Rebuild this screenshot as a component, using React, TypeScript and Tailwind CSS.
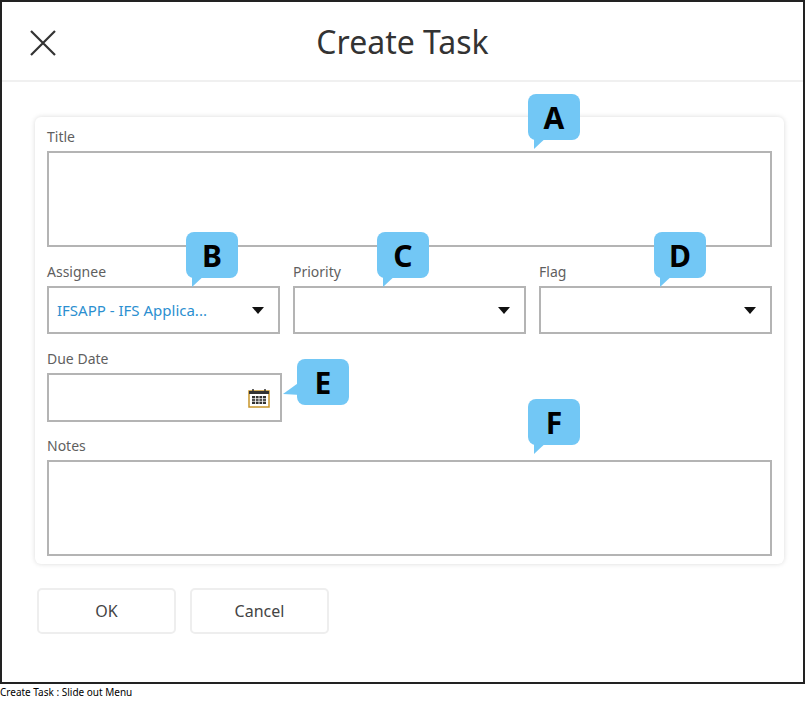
import React from 'react';

const Callout = ({ letter, className, tail }: { letter: string; className: string; tail: 'down' | 'left' }) => (
  <div className={`absolute w-[52px] h-[46px] ${className}`}>
    <div className="w-full h-full rounded-[8px] bg-[#72c7f5] flex items-center justify-center text-[30px] font-bold text-black font-['Liberation_Sans',sans-serif]">
      {letter}
    </div>
    {tail === 'down' ? (
      <svg className="absolute left-[4px] top-[40px]" width="18" height="16" viewBox="0 0 18 16">
        <path d="M2 0 L18 0 L2 15 Z" fill="#72c7f5" />
      </svg>
    ) : (
      <svg className="absolute left-[-14px] top-[22px]" width="18" height="16" viewBox="0 0 18 16">
        <path d="M18 0 L18 14 L0 13 Z" fill="#72c7f5" />
      </svg>
    )}
  </div>
);

const Caret = () => (
  <svg width="12" height="7" viewBox="0 0 12 7"><path d="M0 0 H12 L6 7 Z" fill="#111" /></svg>
);

const Label = ({ children }: { children: React.ReactNode }) => (
  <div className="text-[14px] text-[#5f5f5f] leading-[20px] mb-[4px]">{children}</div>
);

const Select = ({ value }: { value?: string }) => (
  <div className="h-[48px] border-2 border-[#b4b4b4] flex items-center pl-[8px] pr-[14px]">
    <span className="flex-1 text-[15px] text-[#2b8fd0]">{value}</span>
    <Caret />
  </div>
);

export default function App() {
  return (
    <div className="w-[805px] h-[702px] bg-white font-['Open_Sans',sans-serif] relative">
      <div className="w-[805px] h-[684px] border-2 border-[#222] flex flex-col">
        <div className="h-[80px] flex items-center relative border-b-2 border-[#f0f0f0]">
          <svg className="absolute left-[28px] top-[28px]" width="26" height="26" viewBox="0 0 26 26">
            <path d="M1 1 L25 25 M25 1 L1 25" stroke="#333" strokeWidth="2.2" />
          </svg>
          <div className="w-full text-center text-[32px] text-[#333] pt-[2px]">Create Task</div>
        </div>
        <div className="pl-[33px] pr-[19px] pt-[35px]">
          <div className="rounded-[6px] shadow-[0_0_5px_rgba(0,0,0,0.15)] px-[12px] pt-[10px] pb-[8px]">
            <Label>Title</Label>
            <div className="h-[96px] border-2 border-[#b4b4b4]" />
            <div className="grid grid-cols-3 gap-x-[13px] mt-[15px]">
              <div><Label>Assignee</Label><Select value="IFSAPP - IFS Applica..." /></div>
              <div><Label>Priority</Label><Select /></div>
              <div><Label>Flag</Label><Select /></div>
            </div>
            <div className="w-[235px] mt-[15px]">
              <Label>Due Date</Label>
              <div className="h-[49px] border-2 border-[#b4b4b4] flex items-center justify-end pr-[10px]">
                <svg width="22" height="20" viewBox="0 0 22 20">
                  <rect x="1" y="3" width="20" height="16" fill="#fff" stroke="#c8952a" strokeWidth="1.5" />
                  <rect x="1" y="3" width="20" height="3" fill="#333" />
                  <path d="M5 1 V4 M17 1 V4" stroke="#333" strokeWidth="1.5" />
                  <rect x="4" y="8" width="14" height="8" fill="#333" />
                  <path d="M4 10.7 H18 M4 13.3 H18 M7.5 8 V16 M11 8 V16 M14.5 8 V16" stroke="#fff" strokeWidth="0.8" />
                </svg>
              </div>
            </div>
            <div className="mt-[14px]">
              <Label>Notes</Label>
              <div className="h-[96px] border-2 border-[#b4b4b4]" />
            </div>
          </div>
          <div className="flex gap-[14px] mt-[24px] pl-[2px]">
            <button className="w-[139px] h-[46px] rounded-[5px] border-2 border-[#eee] text-[16px] text-[#444]">OK</button>
            <button className="w-[139px] h-[46px] rounded-[5px] border-2 border-[#eee] text-[16px] text-[#444]">Cancel</button>
          </div>
        </div>
      </div>
      <div className="text-[10px] text-black leading-[14px] pt-[1px] font-['Liberation_Sans',sans-serif]">Create Task : Slide out Menu</div>
      <Callout letter="A" tail="down" className="left-[528px] top-[94px]" />
      <Callout letter="B" tail="down" className="left-[186px] top-[232px]" />
      <Callout letter="C" tail="down" className="left-[377px] top-[232px]" />
      <Callout letter="D" tail="down" className="left-[654px] top-[232px]" />
      <Callout letter="E" tail="left" className="left-[297px] top-[359px]" />
      <Callout letter="F" tail="down" className="left-[528px] top-[399px]" />
    </div>
  );
}
